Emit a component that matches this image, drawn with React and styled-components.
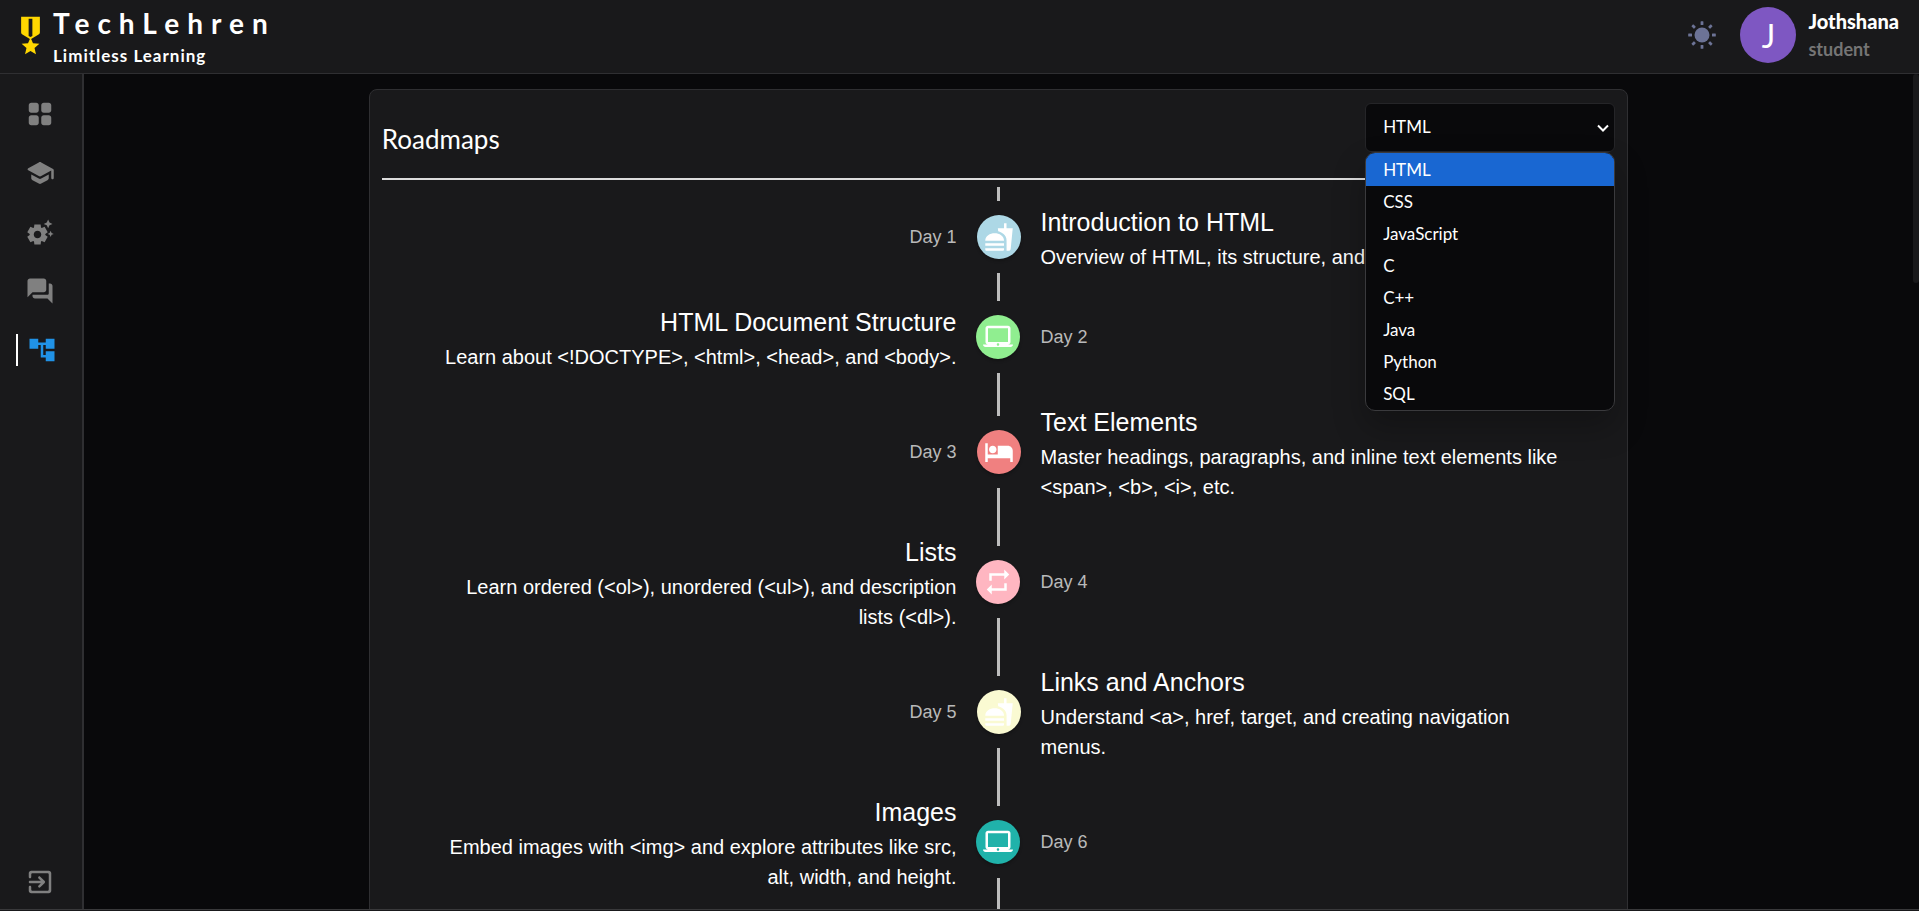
import React, { useState } from "react";
import styled, { createGlobalStyle } from "styled-components";
import {
  MdFastfood,
  MdLaptopMac,
  MdHotel,
  MdRepeat,
  MdAccountTree,
  MdMilitaryTech,
  MdSettingsSuggest,
} from "react-icons/md";

const color = {
  page: "#09090b",
  panel: "#19191b",
  line: "#2f2f32",
  muted: "#808080",
  accent: "#2092e6",
};

const uiFont = `Lato, "Noto Sans", sans-serif`;
const bodyFont = `"Liberation Sans", Arial, sans-serif`;

const GlobalStyle = createGlobalStyle`
  *, *::before, *::after { box-sizing: border-box; }
  body { margin: 0; background: ${color.page}; color: #fff; font-family: ${uiFont}; }
`;

const Page = styled.div`
  display: flex;
  flex-direction: column;
  height: 100vh;
  overflow: hidden;
  padding-bottom: 1px;
  background: ${color.panel};
`;

const Header = styled.header`
  display: flex;
  align-items: center;
  justify-content: space-between;
  flex: none;
  height: 74px;
  padding: 0 20px 3px 8px;
  border-bottom: 1px solid ${color.line};
`;

const Brand = styled.a`
  display: flex;
  align-items: center;
  color: #fff;
  text-decoration: none;
  svg { color: #ffd700; }
`;

const BrandText = styled.span`
  display: flex;
  flex-direction: column;
  padding-top: 6px;
  font-weight: 700;
`;

const BrandName = styled.span`
  font-size: 28px;
  line-height: 36px;
  letter-spacing: 8px;
`;

const BrandTagline = styled.span`
  font-size: 17px;
  line-height: 30px;
  letter-spacing: 1px;
`;

const Account = styled.div`
  display: flex;
  align-items: center;
`;

const ThemeButton = styled.button`
  display: flex;
  margin-right: 24px;
  padding: 0;
  border: 0;
  background: none;
  color: #6c7396;
  cursor: pointer;
`;

const Avatar = styled.div`
  display: grid;
  place-items: center;
  width: 56px;
  height: 56px;
  margin-right: 12px;
  border-radius: 50%;
  background: #7e57c2;
  font-size: 32px;
`;

const UserText = styled.div`
  display: flex;
  flex-direction: column;
  line-height: 28px;
`;

const UserName = styled.span`
  font-size: 20px;
  font-weight: 900;
`;

const UserRole = styled.span`
  font-size: 18px;
  font-weight: 700;
  color: #757575;
`;

const Body = styled.div`
  display: flex;
  flex: 1;
  min-height: 0;
  border-bottom: 1px solid #39393b;
`;

const Sidebar = styled.nav`
  display: flex;
  flex-direction: column;
  justify-content: space-between;
  flex: none;
  width: 84px;
  padding: 24px 0 12px 16px;
  border-right: 2px solid ${color.line};
`;

const NavList = styled.div`
  display: flex;
  flex-direction: column;
  gap: 27px;
`;

const NavItem = styled.a`
  display: flex;
  align-items: center;
  width: 50px;
  height: 32px;
  padding-left: 9px;
  color: ${(p) => (p.$active ? color.accent : color.muted)};
  border-left: ${(p) => (p.$active ? "2px solid #fff" : "0")};
`;

const LogoutButton = styled.button`
  display: flex;
  padding: 0 9px;
  border: 0;
  background: none;
  color: ${color.muted};
  cursor: pointer;
`;

const Main = styled.main`
  flex: 1;
  min-width: 0;
  padding: 15px;
  overflow: hidden;
  background: ${color.page};
`;

const ScrollTrack = styled.div`
  flex: none;
  width: 6px;
  background: ${color.page};
`;

const ScrollThumb = styled.div`
  height: 25%;
  border-radius: 3px;
  background: ${color.panel};
`;

const Card = styled.section`
  width: 70%;
  min-height: 100vh;
  margin: 0 auto;
  padding: 13px 12px;
  border: 1px solid ${color.line};
  border-radius: 8px;
  background: ${color.panel};
`;

const CardHeader = styled.div`
  display: flex;
  align-items: flex-start;
  justify-content: space-between;
  height: 77px;
  border-bottom: 2px solid #dcdcdc;
`;

const CardTitle = styled.h1`
  margin: 0;
  font-size: 26px;
  line-height: 72px;
  font-weight: 400;
`;

const Picker = styled.div`
  position: relative;
  width: 250px;
`;

const PickerSelect = styled.select`
  display: block;
  width: 100%;
  height: 49px;
  padding: 0 17px 2px;
  appearance: none;
  border: 1px solid #252528;
  border-radius: 6px;
  outline: 0;
  background: ${color.page};
  color: #fff;
  font: 400 17px/24px ${uiFont};
`;

const PickerArrow = styled.svg`
  position: absolute;
  top: 19px;
  right: 6px;
  pointer-events: none;
`;

const Menu = styled.ul`
  position: absolute;
  z-index: 2;
  top: 100%;
  left: 0;
  right: 0;
  margin: 0;
  padding: 1px 0 0;
  overflow: hidden;
  list-style: none;
  border: 1px solid #3a3a3d;
  border-radius: 10px;
  background: ${color.page};
  box-shadow: 0 16px 32px rgba(0, 0, 0, 0.25);
`;

const MenuItem = styled.li`
  padding: 0 17px;
  font-size: 17px;
  line-height: 32px;
  cursor: pointer;
  background: ${(p) => (p.$selected ? "#1967d2" : "transparent")};
  box-shadow: ${(p) => (p.$selected ? "0 -1px 0 #1967d2" : "none")};
`;

const Timeline = styled.ol`
  margin: 0;
  padding: 7px 30px;
  list-style: none;
  font-family: ${bodyFont};
`;

const TimelineItem = styled.li`
  display: flex;
  flex-direction: ${(p) => (p.$reverse ? "row-reverse" : "row")};
`;

const Side = styled.div`
  flex: 1;
  min-width: 0;
  padding: 15px 20px;
  text-align: ${(p) => p.$align};
`;

const DaySide = styled(Side)`
  align-self: center;
  font-size: 18px;
  line-height: 28px;
  color: #b9b9ba;
`;

const Separator = styled.div`
  display: flex;
  flex-direction: column;
  align-items: center;
  flex: none;
  width: 44px;
`;

const Connector = styled.span`
  flex: 1;
  width: 3px;
  background: #bdbdbd;
`;

const Dot = styled.span`
  display: flex;
  margin: 14px 0;
  padding: 7px;
  border-radius: 50%;
  background: ${(p) => p.$color};
  box-shadow: 0 2px 3px rgba(0, 0, 0, 0.25);
`;

const StepTitle = styled.h2`
  margin: 0;
  font-size: 25px;
  line-height: 40px;
  font-weight: 400;
`;

const StepText = styled.p`
  margin: 0;
  font-size: 20px;
  line-height: 30px;
`;

const Tail = styled.li`
  display: flex;
  flex-direction: column;
  align-items: center;
  height: 32px;
`;

const NavIcon = ({ d }) => (
  <svg width="30" height="30" viewBox="0 0 24 24" fill="currentColor" aria-hidden="true">
    <path d={d} />
  </svg>
);

const icons = {
  grid: "M5 11h4c1.1 0 2-.9 2-2V5c0-1.1-.9-2-2-2H5c-1.1 0-2 .9-2 2v4c0 1.1.9 2 2 2zm0 10h4c1.1 0 2-.9 2-2v-4c0-1.1-.9-2-2-2H5c-1.1 0-2 .9-2 2v4c0 1.1.9 2 2 2zM13 5v4c0 1.1.9 2 2 2h4c1.1 0 2-.9 2-2V5c0-1.1-.9-2-2-2h-4c-1.1 0-2 .9-2 2zm2 16h4c1.1 0 2-.9 2-2v-4c0-1.1-.9-2-2-2h-4c-1.1 0-2 .9-2 2v4c0 1.1.9 2 2 2z",
  school:
    "M5 13.18v2.81c0 .73.4 1.41 1.04 1.76l5 2.73c.6.33 1.32.33 1.92 0l5-2.73c.64-.35 1.04-1.03 1.04-1.76v-2.81l-6.04 3.3c-.6.33-1.32.33-1.92 0L5 13.18zm6.04-9.66-8.43 4.6c-.69.38-.69 1.38 0 1.76l8.43 4.6c.6.33 1.32.33 1.92 0L21 10.09V16c0 .55.45 1 1 1s1-.45 1-1V9.59c0-.37-.2-.7-.52-.88l-9.52-5.19c-.6-.32-1.32-.32-1.92 0z",
  chat: "M20 6h-1v8c0 .55-.45 1-1 1H6v1c0 1.1.9 2 2 2h10l4 4V8c0-1.1-.9-2-2-2zm-3 5V4c0-1.1-.9-2-2-2H4c-1.1 0-2 .9-2 2v13l4-4h9c1.1 0 2-.9 2-2z",
  exit: "M10.79 16.29c.39.39 1.02.39 1.41 0l3.59-3.59c.39-.39.39-1.02 0-1.41L12.2 7.7c-.39-.39-1.02-.39-1.41 0-.39.39-.39 1.02 0 1.41L12.67 11H4c-.55 0-1 .45-1 1s.45 1 1 1h8.67l-1.88 1.88c-.39.39-.38 1.03 0 1.41zM19 3H5c-1.11 0-2 .9-2 2v3c0 .55.45 1 1 1s1-.45 1-1V6c0-.55.45-1 1-1h12c.55 0 1 .45 1 1v12c0 .55-.45 1-1 1H6c-.55 0-1-.45-1-1v-2c0-.55-.45-1-1-1s-1 .45-1 1v3c0 1.1.9 2 2 2h14c1.1 0 2-.9 2-2V5c0-1.1-.9-2-2-2z",
};

const SunIcon = () => (
  <svg width="28" height="28" viewBox="0 0 28 28" fill="currentColor" aria-hidden="true">
    <circle cx="14" cy="14" r="7.5" />
    {[0, 45, 90, 135, 180, 225, 270, 315].map((a) => (
      <rect key={a} x="12.6" y="0.2" width="2.8" height="3.8" rx="0.5" transform={`rotate(${a} 14 14)`} />
    ))}
  </svg>
);

const languages = ["HTML", "CSS", "JavaScript", "C", "C++", "Java", "Python", "SQL"];

const steps = [
  { title: "Introduction to HTML", text: "Overview of HTML, its structure, and usage.", icon: MdFastfood, color: "#add8e6" },
  { title: "HTML Document Structure", text: "Learn about <!DOCTYPE>, <html>, <head>, and <body>.", icon: MdLaptopMac, color: "#90ee90" },
  { title: "Text Elements", text: "Master headings, paragraphs, and inline text elements like <span>, <b>, <i>, etc.", icon: MdHotel, color: "#f08080" },
  { title: "Lists", text: "Learn ordered (<ol>), unordered (<ul>), and description lists (<dl>).", icon: MdRepeat, color: "#ffb6c1" },
  { title: "Links and Anchors", text: "Understand <a>, href, target, and creating navigation menus.", icon: MdFastfood, color: "#fafad2" },
  { title: "Images", text: "Embed images with <img> and explore attributes like src, alt, width, and height.", icon: MdLaptopMac, color: "#20b2aa" },
];

function Step({ step, index }) {
  const reverse = index % 2 === 1;
  const Icon = step.icon;
  return (
    <TimelineItem $reverse={reverse}>
      <DaySide $align={reverse ? "left" : "right"}>Day {index + 1}</DaySide>
      <Separator>
        <Connector />
        <Dot $color={step.color}>
          <Icon size={30} aria-hidden="true" />
        </Dot>
        <Connector />
      </Separator>
      <Side $align={reverse ? "right" : "left"}>
        <StepTitle>{step.title}</StepTitle>
        <StepText>{step.text}</StepText>
      </Side>
    </TimelineItem>
  );
}

function LanguagePicker() {
  const [value, setValue] = useState("HTML");
  const [open, setOpen] = useState(true);
  return (
    <Picker>
      <PickerSelect
        aria-label="Roadmap"
        value={value}
        onMouseDown={(e) => {
          e.preventDefault();
          setOpen(!open);
        }}
        onChange={(e) => setValue(e.target.value)}
      >
        {languages.map((l) => (
          <option key={l}>{l}</option>
        ))}
      </PickerSelect>
      <PickerArrow width="12" height="12" viewBox="0 0 12 12" fill="none" stroke="#fff" strokeWidth="2">
        <path d="M1 3.5l5 5 5-5" />
      </PickerArrow>
      {open && (
        <Menu role="listbox" aria-label="Roadmap">
          {languages.map((l) => (
            <MenuItem
              key={l}
              role="option"
              aria-selected={l === value}
              $selected={l === value}
              onClick={() => {
                setValue(l);
                setOpen(false);
              }}
            >
              {l}
            </MenuItem>
          ))}
        </Menu>
      )}
    </Picker>
  );
}

export default function App() {
  return (
    <Page>
      <GlobalStyle />
      <Header>
        <Brand href="#">
          <MdMilitaryTech size={45} aria-hidden="true" />
          <BrandText>
            <BrandName>TechLehren</BrandName>
            <BrandTagline>Limitless Learning</BrandTagline>
          </BrandText>
        </Brand>
        <Account>
          <ThemeButton aria-label="Toggle theme">
            <SunIcon />
          </ThemeButton>
          <Avatar>J</Avatar>
          <UserText>
            <UserName>Jothshana</UserName>
            <UserRole>student</UserRole>
          </UserText>
        </Account>
      </Header>
      <Body>
        <Sidebar>
          <NavList>
            <NavItem href="#" aria-label="Dashboard"><NavIcon d={icons.grid} /></NavItem>
            <NavItem href="#" aria-label="Courses"><NavIcon d={icons.school} /></NavItem>
            <NavItem href="#" aria-label="Tools"><MdSettingsSuggest size={30} /></NavItem>
            <NavItem href="#" aria-label="Discussions"><NavIcon d={icons.chat} /></NavItem>
            <NavItem href="#" aria-label="Roadmaps" $active><MdAccountTree size={30} /></NavItem>
          </NavList>
          <LogoutButton aria-label="Log out"><NavIcon d={icons.exit} /></LogoutButton>
        </Sidebar>
        <Main>
          <Card>
            <CardHeader>
              <CardTitle>Roadmaps</CardTitle>
              <LanguagePicker />
            </CardHeader>
            <Timeline>
              {steps.map((s, i) => (
                <Step key={s.title} step={s} index={i} />
              ))}
              <Tail aria-hidden="true">
                <Connector />
              </Tail>
            </Timeline>
          </Card>
        </Main>
        <ScrollTrack>
          <ScrollThumb />
        </ScrollTrack>
      </Body>
    </Page>
  );
}
